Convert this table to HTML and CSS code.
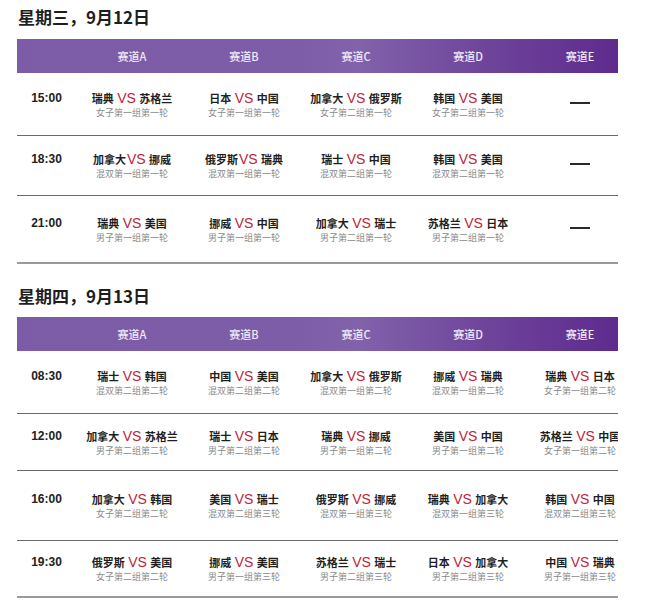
FILE: index.html
```html
<!DOCTYPE html>
<html lang="zh-CN">
<head>
<meta charset="utf-8">
<title>赛程</title>
<link rel="stylesheet" href="styles.css">
</head>
<body>
<section class="day">
  <h2 class="day-title">星期三，9月12日</h2>
  <div class="sched">
    <div class="grid head">
      <div></div><div>赛道A</div><div>赛道B</div><div>赛道C</div><div>赛道D</div><div>赛道E</div>
    </div>
    <div class="grid row h63">
      <div class="time">15:00</div>
      <div class="match"><div class="teams">瑞典 <span class="vs">VS</span> 苏格兰</div><div class="sub">女子第一组第一轮</div></div>
      <div class="match"><div class="teams">日本 <span class="vs">VS</span> 中国</div><div class="sub">女子第一组第一轮</div></div>
      <div class="match"><div class="teams">加拿大 <span class="vs">VS</span> 俄罗斯</div><div class="sub">女子第二组第一轮</div></div>
      <div class="match"><div class="teams">韩国 <span class="vs">VS</span> 美国</div><div class="sub">女子第二组第一轮</div></div>
      <div class="match"><span class="dash"></span></div>
    </div>
    <div class="grid row h60">
      <div class="time">18:30</div>
      <div class="match"><div class="teams">加拿大<span class="vs">VS</span> 挪威</div><div class="sub">混双第一组第一轮</div></div>
      <div class="match"><div class="teams">俄罗斯<span class="vs">VS</span> 瑞典</div><div class="sub">混双第一组第一轮</div></div>
      <div class="match"><div class="teams">瑞士 <span class="vs">VS</span> 中国</div><div class="sub">混双第二组第一轮</div></div>
      <div class="match"><div class="teams">韩国 <span class="vs">VS</span> 美国</div><div class="sub">混双第二组第一轮</div></div>
      <div class="match"><span class="dash"></span></div>
    </div>
    <div class="grid row h67 last">
      <div class="time">21:00</div>
      <div class="match"><div class="teams">瑞典 <span class="vs">VS</span> 美国</div><div class="sub">男子第一组第一轮</div></div>
      <div class="match"><div class="teams">挪威 <span class="vs">VS</span> 中国</div><div class="sub">男子第一组第一轮</div></div>
      <div class="match"><div class="teams">加拿大 <span class="vs">VS</span> 瑞士</div><div class="sub">男子第二组第一轮</div></div>
      <div class="match"><div class="teams">苏格兰 <span class="vs">VS</span> 日本</div><div class="sub">男子第二组第一轮</div></div>
      <div class="match"><span class="dash"></span></div>
    </div>
  </div>
</section>

<section class="day second">
  <h2 class="day-title">星期四，9月13日</h2>
  <div class="sched">
    <div class="grid head">
      <div></div><div>赛道A</div><div>赛道B</div><div>赛道C</div><div>赛道D</div><div>赛道E</div>
    </div>
    <div class="grid row h63">
      <div class="time">08:30</div>
      <div class="match"><div class="teams">瑞士 <span class="vs">VS</span> 韩国</div><div class="sub">混双第二组第二轮</div></div>
      <div class="match"><div class="teams">中国 <span class="vs">VS</span> 美国</div><div class="sub">混双第二组第二轮</div></div>
      <div class="match"><div class="teams">加拿大 <span class="vs">VS</span> 俄罗斯</div><div class="sub">混双第一组第二轮</div></div>
      <div class="match"><div class="teams">挪威 <span class="vs">VS</span> 瑞典</div><div class="sub">混双第一组第二轮</div></div>
      <div class="match"><div class="teams">瑞典 <span class="vs">VS</span> 日本</div><div class="sub">女子第一组第二轮</div></div>
    </div>
    <div class="grid row h57">
      <div class="time">12:00</div>
      <div class="match"><div class="teams">加拿大 <span class="vs">VS</span> 苏格兰</div><div class="sub">男子第二组第二轮</div></div>
      <div class="match"><div class="teams">瑞士 <span class="vs">VS</span> 日本</div><div class="sub">男子第二组第二轮</div></div>
      <div class="match"><div class="teams">瑞典 <span class="vs">VS</span> 挪威</div><div class="sub">男子第一组第二轮</div></div>
      <div class="match"><div class="teams">美国 <span class="vs">VS</span> 中国</div><div class="sub">男子第一组第二轮</div></div>
      <div class="match"><div class="teams">苏格兰 <span class="vs">VS</span> 中国</div><div class="sub">女子第一组第二轮</div></div>
    </div>
    <div class="grid row h70">
      <div class="time">16:00</div>
      <div class="match"><div class="teams">加拿大 <span class="vs">VS</span> 韩国</div><div class="sub">女子第二组第二轮</div></div>
      <div class="match"><div class="teams">美国 <span class="vs">VS</span> 瑞士</div><div class="sub">混双第二组第三轮</div></div>
      <div class="match"><div class="teams">俄罗斯 <span class="vs">VS</span> 挪威</div><div class="sub">混双第一组第三轮</div></div>
      <div class="match"><div class="teams">瑞典 <span class="vs">VS</span> 加拿大</div><div class="sub">混双第一组第三轮</div></div>
      <div class="match"><div class="teams">韩国 <span class="vs">VS</span> 中国</div><div class="sub">混双第二组第三轮</div></div>
    </div>
    <div class="grid row h57 last">
      <div class="time">19:30</div>
      <div class="match"><div class="teams">俄罗斯 <span class="vs">VS</span> 美国</div><div class="sub">女子第二组第二轮</div></div>
      <div class="match"><div class="teams">挪威 <span class="vs">VS</span> 美国</div><div class="sub">男子第一组第三轮</div></div>
      <div class="match"><div class="teams">苏格兰 <span class="vs">VS</span> 瑞士</div><div class="sub">男子第二组第三轮</div></div>
      <div class="match"><div class="teams">日本 <span class="vs">VS</span> 加拿大</div><div class="sub">男子第二组第三轮</div></div>
      <div class="match"><div class="teams">中国 <span class="vs">VS</span> 瑞典</div><div class="sub">男子第一组第三轮</div></div>
    </div>
  </div>
</section>
</body>
</html>
```
FILE: styles.css
```css
* { box-sizing: border-box; }
html, body {
  margin: 0;
  padding: 0;
  background: #ffffff;
  font-family: "Noto Sans", "Noto Sans CJK SC", sans-serif;
  color: #222;
}
.day { padding-top: 7px; }
.day.second { padding-top: 22px; }
.day-title {
  margin: 0 0 12px 18px;
  font-family: "Noto Sans CJK SC", sans-serif;
  font-size: 17px;
  line-height: 20px;
  font-weight: 700;
  color: #1e1e1e;
}
.second .day-title { margin-bottom: 11px; }
.sched {
  margin-left: 17px;
  width: 601px;
  overflow: hidden;
}
.grid {
  display: grid;
  grid-template-columns: 59px repeat(5, 112px);
  width: 619px;
}
.head {
  height: 34px;
  align-items: center;
  text-align: center;
  font-family: "Noto Sans CJK SC", sans-serif;
  font-size: 11px;
  font-weight: 500;
  color: #f1eaf7;
  background: linear-gradient(90deg, #7c5ca6 0%, #7d5da7 44%, #8262ab 55%, #6e449b 76%, #5e2b8d 97%);
}
.row {
  align-items: center;
  border-bottom: 1px solid #6a6a6a;
}
.row.last { border-bottom: 2px solid #9a9a9a; }
.h57 { height: 57px; }
.h60 { height: 60px; }
.h63 { height: 63px; }
.h67 { height: 68px; }
.h70 { height: 70px; }
.time {
  text-align: center;
  font-family: "Liberation Sans", sans-serif;
  font-size: 12px;
  font-weight: 700;
  line-height: 15px;
  padding-bottom: 12px;
  color: #222;
}
.match {
  display: flex;
  flex-direction: column;
  align-items: center;
  white-space: nowrap;
}
.teams {
  font-family: "Noto Sans CJK SC", sans-serif;
  font-size: 11px;
  font-weight: 700;
  line-height: 15px;
  height: 15px;
  color: #1f1f1f;
}
.vs {
  font-family: "Liberation Sans", sans-serif;
  font-size: 14px;
  line-height: 14px;
  font-weight: 400;
  color: #c0243a;
  margin: 0 1px;
}
.sub {
  margin-top: 1px;
  font-family: "Noto Sans CJK SC", sans-serif;
  font-size: 9px;
  line-height: 11px;
  color: #8a8a8a;
}
.dash {
  display: block;
  width: 20px;
  height: 2px;
  background: #2a2a2a;
  margin-bottom: 3px;
}
```
